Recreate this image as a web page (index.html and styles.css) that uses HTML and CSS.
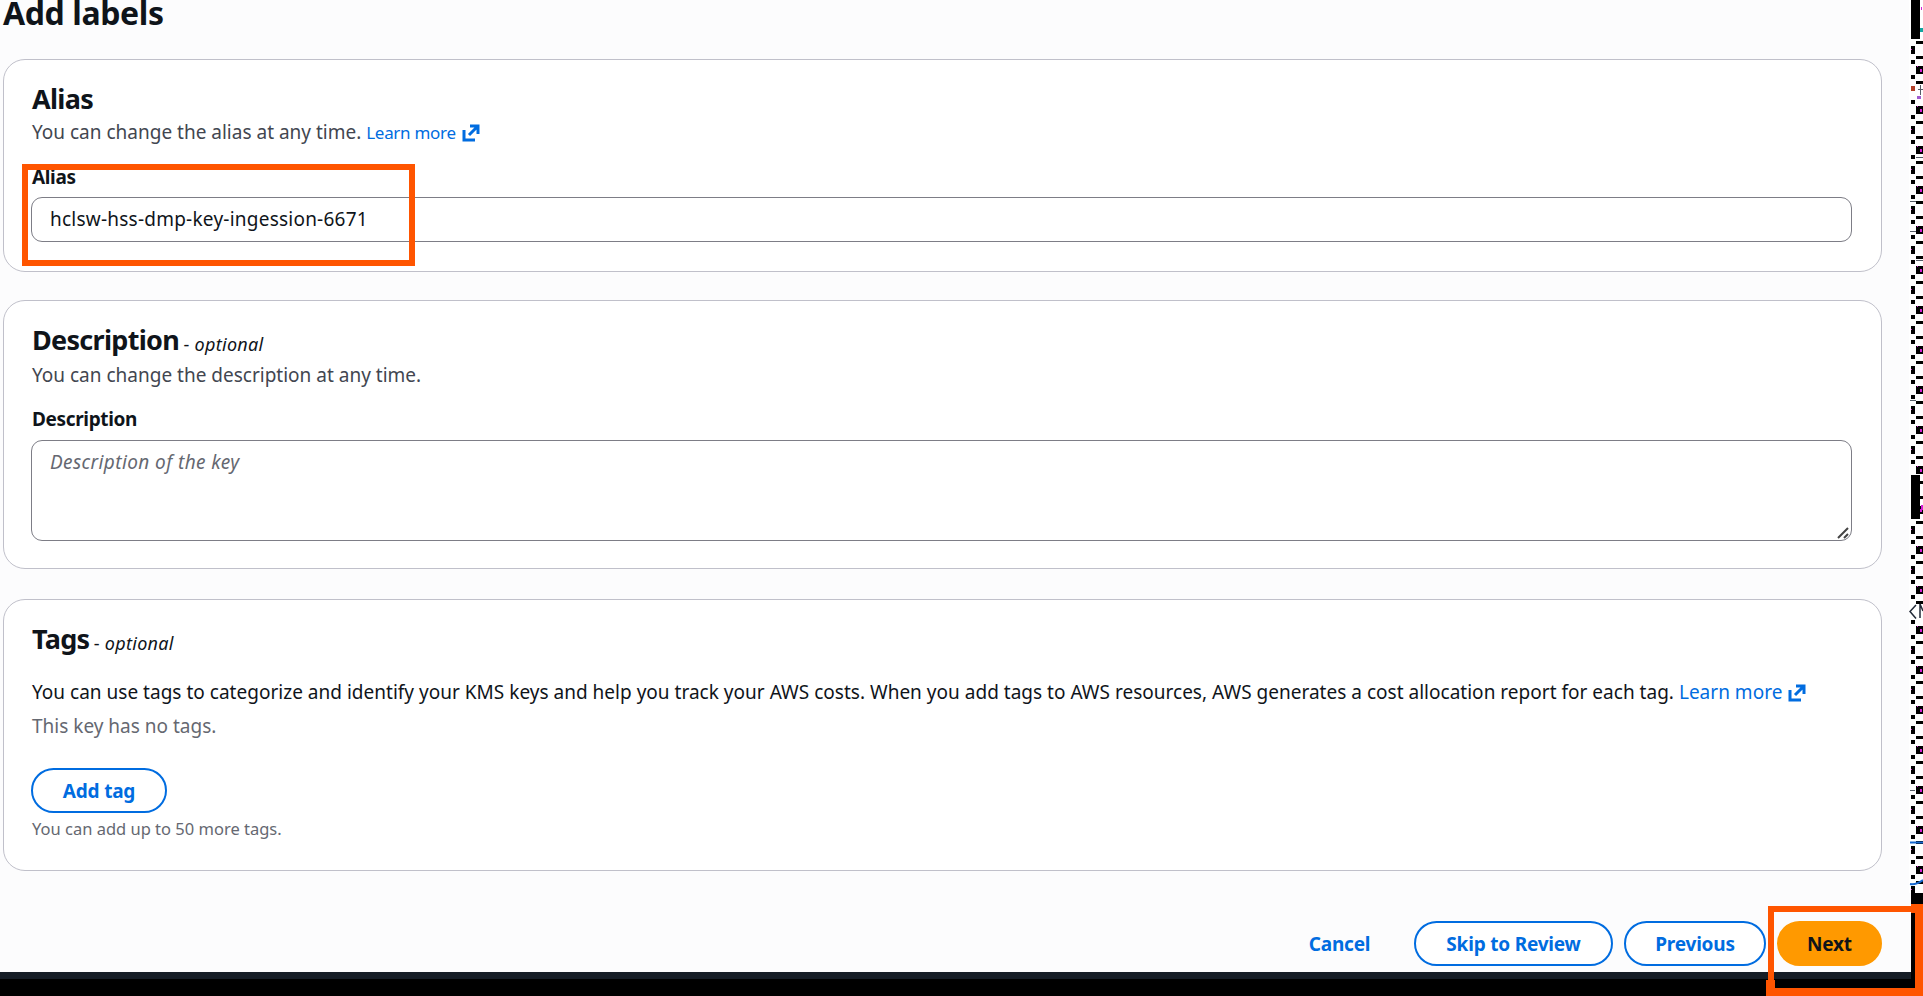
FILE: index.html
```html
<!DOCTYPE html>
<html lang="en">
<head>
  <meta charset="UTF-8" />
  <meta name="viewport" content="width=device-width, initial-scale=1.0"/>
  <title>Add labels</title>
  <link rel="stylesheet" href="styles.css">
</head>
<body>
  <div class="page">
    <main class="content">
      <h1>Add labels</h1>

      <section class="card alias-card">
        <h2>Alias</h2>
        <p class="hint">You can change the alias at any time.
          <a class="small-link" href="#">Learn more<svg class="ext" viewBox="0 0 18 18"><path d="M8 2h8v8M16 2L7 11M2 6v10h11" /></svg></a>
        </p>
        <label for="alias">Alias</label>
        <input id="alias" type="text" value="hclsw-hss-dmp-key-ingession-6671">
        <div class="highlight highlight-alias"></div>
      </section>

      <section class="card desc-card">
        <h2>Description <span class="optional">- <i>optional</i></span></h2>
        <p class="hint">You can change the description at any time.</p>
        <label for="description">Description</label>
        <div class="textarea-wrap">
          <textarea id="description" placeholder="Description of the key"></textarea>
          <svg class="grip" viewBox="0 0 14 14"><path d="M1 12L11 2M7 12l4-4" /></svg>
        </div>
      </section>

      <section class="card tags-card">
        <h2>Tags <span class="optional">- <i>optional</i></span></h2>
        <p class="info">You can use tags to categorize and identify your KMS keys and help you track your AWS costs. When you add tags to AWS resources, AWS generates a cost allocation report for each tag.
          <a href="#">Learn more<svg class="ext" viewBox="0 0 18 18"><path d="M8 2h8v8M16 2L7 11M2 6v10h11" /></svg></a>
        </p>
        <p class="empty">This key has no tags.</p>
        <button class="btn add-tag">Add tag</button>
        <p class="limit">You can add up to 50 more tags.</p>
      </section>

      <div class="actions">
        <button class="btn link">Cancel</button>
        <button class="btn skip">Skip to Review</button>
        <button class="btn previous">Previous</button>
        <button class="btn primary">Next</button>
      </div>
    </main>

    <svg class="edge" width="14" height="996" viewBox="0 0 14 996">
      <defs>
        <pattern id="dots" x="0" y="45" width="14" height="40" patternUnits="userSpaceOnUse">
          <path d="M2 1h4v8h-4zM2 15h4v4h-4zM2 30h4v4h-4zM7 11h7v3h-7zM7 21h7v8h-7zM7 36h7v3h-7z" />
          <path fill="#d61fd6" d="M2 4h1v1h-1zM11 24h2v3h-2zM8 21h1v1h-1z" />
        </pattern>
      </defs>
      <rect width="14" height="893" fill="#fff" />
      <rect y="39" width="14" height="854" fill="url(#dots)" />
      <path d="M2 0h9v39h-9zM2 475h9v44h-9zM2 893h12v103h-12z" />
      <path fill="#d61fd6" d="M12 7h1v3h-1zM12 505h2v5h-2z" />
      <path fill="#12a5a0" d="M11 28h3v4h-3z" />
      <rect x="1" y="84" width="13" height="15" fill="#fff" />
      <path fill="none" stroke="#555b66" d="M9 89.500h5M11.500 85v10M7 157.500h7M1 201.500h6M1 231.500h6M7 260.500h7M1 400.500h6M1 790.500h5" />
      <path fill="#b3402a" d="M2 86h4v5h-4z" />
      <path fill="#a05ad0" d="M8 96h4v3h-4z" />
      <rect y="604" width="14" height="15" fill="#fff" />
      <path fill="none" stroke="#222a38" stroke-width="1.500" d="M7 605L1 611.500l6 7M11 618v-14l3 7" />
      <path fill="none" stroke="#1768d2" stroke-width="2" d="M1 842.500h13M1 884q6 1 13-4" />
    </svg>
    <footer class="footer-bar"></footer>
    <div class="highlight highlight-next"></div>
  </div>
</body>
</html>
```
FILE: styles.css
```css
* {
  box-sizing: border-box;
}

body {
  margin: 0;
  background: #fcfcfd;
  color: #0f141a;
  font-family: 'Noto Sans', 'Open Sans', sans-serif;
  font-size: 19px;
  line-height: 28px;
}

.page {
  position: relative;
  width: 1923px;
  height: 996px;
  overflow: hidden;
}

.content {
  width: 1882px;
  height: 972px;
  padding-left: 3px;
}

h1,
h2,
p {
  margin: 0;
}

h1 {
  height: 59px;
  font-size: 32px;
  line-height: 26px;
  letter-spacing: -0.4px;
}

h2 {
  font-size: 27px;
  line-height: 36px;
  letter-spacing: -0.7px;
  white-space: nowrap;
}

a {
  color: #006ce0;
  text-decoration: none;
}

.card {
  position: relative;
  border: 1px solid #c0c0ca;
  border-radius: 22px;
  background: #fff;
  padding: 21px 28px;
}

.alias-card {
  height: 213px;
  margin-bottom: 28px;
}

.desc-card {
  height: 269px;
  margin-bottom: 30px;
}

.tags-card {
  height: 272px;
}

.hint {
  color: #424650;
}

.alias-card .hint {
  padding-top: 1px;
}

.small-link {
  font-size: 17px;
  letter-spacing: -0.3px;
}

.ext {
  width: 18px;
  height: 18px;
  margin-left: 6px;
  vertical-align: -3px;
  fill: none;
  stroke: #006ce0;
  stroke-width: 3;
}

label {
  display: block;
  margin-top: 17px;
  font-weight: 700;
  line-height: 26px;
  letter-spacing: -0.35px;
}

input,
textarea {
  display: block;
  width: 1821px;
  margin: 0 0 0 -1px;
  padding: 0 18px;
  border: 1px solid #7d7d86;
  border-radius: 11px;
  background: #fff;
  color: #0f141a;
  font: inherit;
  letter-spacing: 0.23px;
}

input {
  height: 45px;
  margin-top: 7px;
  padding-bottom: 1px;
}

textarea {
  height: 101px;
  margin-top: 8px;
  padding-top: 7px;
  resize: none;
}

textarea::placeholder {
  color: #656871;
  font-style: italic;
  letter-spacing: 0.4px;
}

.textarea-wrap {
  position: relative;
}

.grip {
  position: absolute;
  right: 2px;
  bottom: 1px;
  width: 14px;
  height: 14px;
  fill: none;
  stroke: #444;
  stroke-width: 2;
}

.optional {
  position: relative;
  top: 1px;
  margin-left: -2px;
  font-size: 18px;
  font-weight: 400;
  letter-spacing: 0.3px;
}

.info {
  margin-top: 18px;
  letter-spacing: 0.015px;
  white-space: nowrap;
}

.empty {
  margin-top: 6px;
  color: #656871;
}

.limit {
  color: #656871;
  font-size: 16.5px;
  line-height: 26px;
}

.btn {
  height: 45px;
  padding: 0;
  border: 2px solid #006ce0;
  border-radius: 23px;
  background: #fff;
  color: #006ce0;
  font: inherit;
  font-weight: 700;
  letter-spacing: -0.2px;
}

.add-tag {
  display: block;
  width: 136px;
  margin: 28px 0 3px -1px;
}

.actions {
  display: flex;
  justify-content: flex-end;
  gap: 11px;
  margin-top: 50px;
}

.link {
  width: 109px;
  margin-right: 9px;
  border-color: transparent;
  background: none;
}

.skip {
  width: 199px;
}

.previous {
  width: 142px;
}

.primary {
  width: 105px;
  border-color: #ff9900;
  background: #ff9900;
  color: #0f141a;
}

.edge {
  position: absolute;
  top: 0;
  right: 0;
}

.footer-bar {
  height: 24px;
  border-top: 7px solid #161d26;
  background: #000;
}

/* annotation boxes */
.highlight {
  position: absolute;
  border: 6px solid #ff5500;
}

.highlight-alias {
  left: 18px;
  top: 104px;
  width: 393px;
  height: 102px;
}

.highlight-next {
  left: 1768px;
  top: 906px;
  width: 155px;
  height: 90px;
  border-width: 6px 8px 8px 6px;
}

.highlight-next::before,
.highlight-next::after {
  content: "";
  position: absolute;
  background: #ff5500;
}

.highlight-next::before {
  left: -8px;
  bottom: -8px;
  width: 9px;
  height: 16px;
}

.highlight-next::after {
  right: -8px;
  top: -8px;
  width: 12px;
  height: 9px;
}
```
